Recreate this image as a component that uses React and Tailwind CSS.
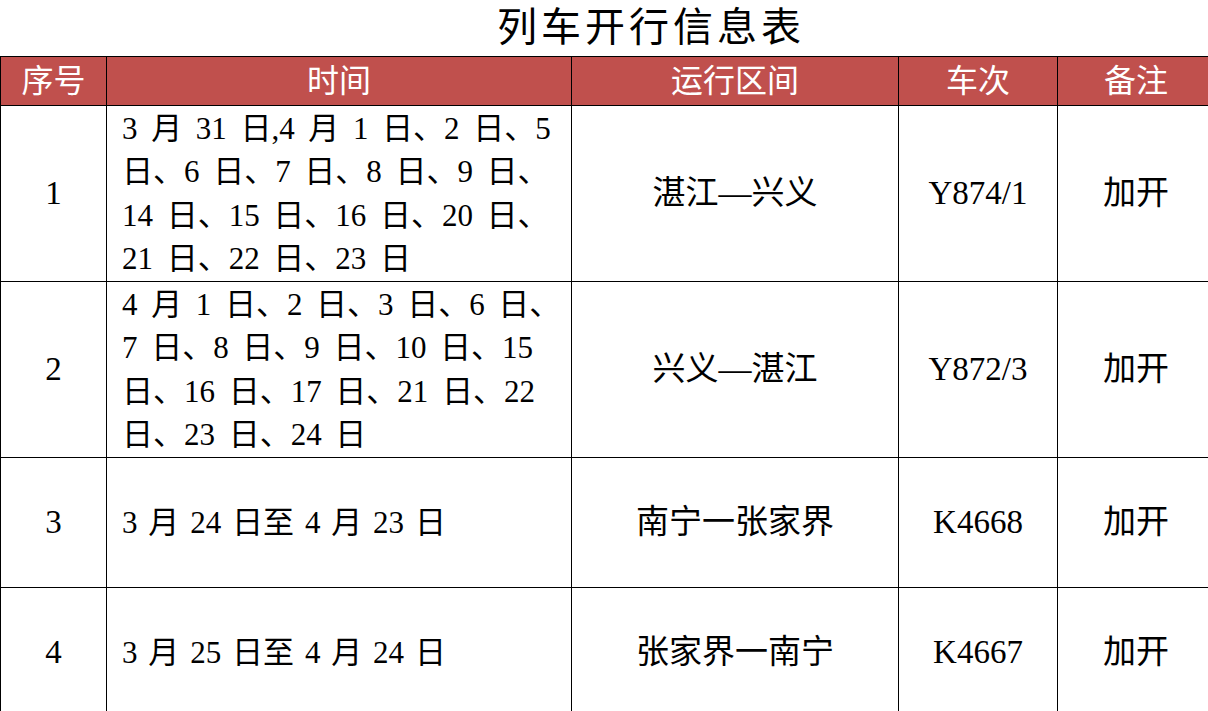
const rows = [
  {
    no: "1",
    time: [
      "3 月 31 日,4 月 1 日、2 日、5",
      "日、6 日、7 日、8 日、9 日、",
      "14 日、15 日、16 日、20 日、",
      "21 日、22 日、23 日",
    ],
    route: "湛江—兴义",
    train: "Y874/1",
    note: "加开",
    tall: true,
  },
  {
    no: "2",
    time: [
      "4 月 1 日、2 日、3 日、6 日、",
      "7 日、8 日、9 日、10 日、15",
      "日、16 日、17 日、21 日、22",
      "日、23 日、24 日",
    ],
    route: "兴义—湛江",
    train: "Y872/3",
    note: "加开",
    tall: true,
  },
  {
    no: "3",
    time: ["3 月 24 日至 4 月 23 日"],
    route: "南宁一张家界",
    train: "K4668",
    note: "加开",
  },
  {
    no: "4",
    time: ["3 月 25 日至 4 月 24 日"],
    route: "张家界一南宁",
    train: "K4667",
    note: "加开",
  },
];

const headers = ["序号", "时间", "运行区间", "车次", "备注"];

export default function App() {
  return (
    <div className="h-[711px] w-[1208px] overflow-hidden bg-white font-['Liberation_Serif','Noto_Sans_CJK_SC',serif] text-black">
      <h1 className="h-[56px] pl-[497px] text-[40px] font-normal leading-[56px] tracking-[4px]">
        列车开行信息表
      </h1>

      <table className="w-[1214px] table-fixed border-collapse text-[33px]">
        <colgroup>
          <col className="w-[106px]" />
          <col className="w-[465px]" />
          <col className="w-[327px]" />
          <col className="w-[159px]" />
          <col className="w-[157px]" />
        </colgroup>

        <thead>
          <tr className="h-[49px] bg-[#c0504d] text-white">
            {headers.map((h) => (
              <th
                key={h}
                className="border border-black p-0 text-center text-[32px] font-normal leading-[40px]"
              >
                {h}
              </th>
            ))}
          </tr>
        </thead>

        <tbody>
          {rows.map((r) => (
            <tr
              key={r.no}
              className={r.tall ? "h-[176px]" : "h-[130px]"}
            >
              <td className="border border-black p-0 text-center align-middle">
                {r.no}
              </td>
              <td
                className={
                  "border border-black py-0 pl-[15px] pr-0 align-middle text-[31px] leading-[43.5px] " +
                  (r.tall ? "[word-spacing:0.19em]" : "[word-spacing:0.1em]")
                }
              >
                {r.time.map((line) => (
                  <div key={line} className="whitespace-nowrap">
                    {line}
                  </div>
                ))}
              </td>
              <td className="border border-black p-0 text-center align-middle">
                {r.route}
              </td>
              <td className="border border-black p-0 text-center align-middle">
                {r.train}
              </td>
              <td className="border border-black p-0 text-center align-middle">
                {r.note}
              </td>
            </tr>
          ))}
        </tbody>
      </table>
    </div>
  );
}
